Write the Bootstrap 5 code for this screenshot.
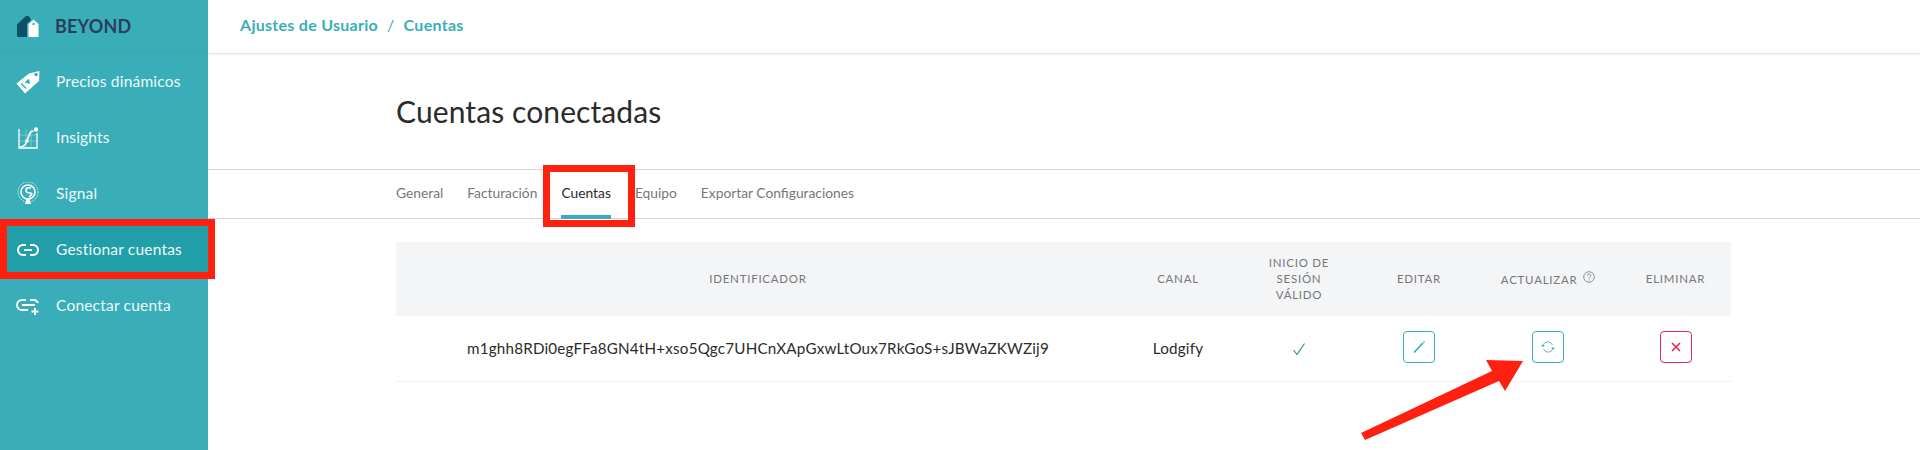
<!DOCTYPE html>
<html lang="es"><head><meta charset="utf-8"><title>Cuentas</title>
<link href="https://cdn.jsdelivr.net/npm/bootstrap@5.3.0/dist/css/bootstrap.min.css" rel="stylesheet">
<style>
html,body{height:450px;overflow:hidden}
body{font-family:Lato,"Open Sans",sans-serif;color:#2b2b2b;background:#fff;position:relative}
.shell{height:450px}
.side{width:208px;background:#39aeb8;flex:none}
.brand{height:53px;padding-left:17px;gap:16px;border-bottom:1px solid #35a6b0;color:#2a3f5d;font-size:18px;font-weight:700;letter-spacing:.2px}
.sitem{height:56px;padding-left:16px;gap:16px;color:#eefafa;font-size:15.5px;letter-spacing:.2px;text-decoration:none}
.sitem.on{background:#229ea8}
.first{height:57px}
.ico{width:24px;height:24px;flex:none}
.main{min-width:0}
.crumb{height:54px;padding-left:32px;padding-bottom:3px;border-bottom:1px solid #e4e4e4;box-shadow:0 1px 2px rgba(0,0,0,.05);color:#39aeb8;font-size:16px;font-weight:700;letter-spacing:.28px;gap:9px}
.crumb i{font-style:normal;font-weight:400}
.head{height:116px;padding-left:188px;border-bottom:1px solid #d4d4d4}
.head h1{font-size:30px;font-weight:400;margin:0;color:#2b2b2b;letter-spacing:.1px;position:relative;top:-1px}
.tabbar{height:49px;padding-left:188px;gap:24px;border-bottom:1px solid #d4d4d4}
.tabbar a{height:49px;display:flex;align-items:center;color:#777;font-size:13.8px;text-decoration:none;border-bottom:4px solid transparent;padding-top:2px;margin-bottom:-1px}
.tabbar a.act{color:#2b2b2b;border-bottom-color:#39aeb8}
.wrap{padding:23px 189px 0 188px}
.wrap table{table-layout:fixed;width:1335px;margin:0}
.wrap th{background:#f4f5f7;height:74px;padding:4px 6px;text-align:center;vertical-align:middle;color:#777;font-size:11.5px;font-weight:400;letter-spacing:.75px;text-transform:uppercase;line-height:16px;border:0}
.wrap th.c3{padding:4px 28px}
.wrap td{height:65px;padding:0;text-align:center;vertical-align:middle;font-size:15.2px;letter-spacing:.2px;border-bottom:1px solid #edf4f4;color:#2b2b2b}
.c1{width:724px}.c2{width:116px}.c3{width:126px}.c4{width:114px}.c5{width:144px}.c6{width:111px}
.sq{width:32px;height:32px;padding:0;border-radius:4px;display:inline-flex;align-items:center;justify-content:center;background:#fff;border:1px solid #39aeb8;position:relative;top:-1px}
.sq.del{border-color:#dc2a55}
.chk{position:relative;top:-1px}
.mark-box{position:absolute;border:7px solid #ff2010;pointer-events:none}
.mk1{left:0;top:219px;width:215px;height:60px}
.mk2{left:543px;top:165px;width:92px;height:62px}
.arrow{position:absolute;left:1360px;top:355px;pointer-events:none}
</style></head><body>
<div class="shell d-flex">
<aside class="side d-flex flex-column">
  <div class="brand d-flex align-items-center">
    <svg width="22" height="23" viewBox="0 0 22 23"><path d="M0 9.500 9 1q2-1 3.500 1L14 5 10 9V22H1.500Q0 22 0 20.500Z" fill="#0d5068"/><path d="M11.500 9 16.500 4.500 21.500 9V22H11.500Z" fill="#fff"/><circle cx="16.500" cy="9" r="1.200" fill="#39aeb8"/></svg>
    <span>BEYOND</span>
  </div>
  <a class="sitem first d-flex align-items-center" href="#"><svg class="ico" viewBox="0 0 24 24"><path d="M0.500 13.500 13 3.500 23.500 1 23 11 9 23.500Z" fill="#fff"/><circle cx="20" cy="4.500" r="1.700" fill="#39aeb8"/><path d="M8.500 12.500 13 8.500 14 14Z" fill="#39aeb8"/><path d="M5 13.500 10 18.500" stroke="#39aeb8" stroke-width="1.500"/></svg><span>Precios dinámicos</span></a>
  <a class="sitem d-flex align-items-center" href="#"><svg class="ico" viewBox="0 0 24 24" fill="none" stroke="#fff"><path d="M3 3v19h18V7" stroke-width="1.300"/><path d="M3 9h18M3 15h18M10 3v19M15 3v19" stroke-width=".5" opacity=".6"/><path d="M3.500 21q5 0 7-5t3-8 4-3" stroke-width="1.600"/><circle cx="11" cy="15" r="1.800" fill="#fff" stroke="none"/><circle cx="20" cy="3.500" r="2.200" fill="#fff" stroke="none"/></svg><span>Insights</span></a>
  <a class="sitem d-flex align-items-center" href="#"><svg class="ico" viewBox="0 0 24 24" fill="none" stroke="#fff"><circle cx="12" cy="10" r="10" stroke-width="1" stroke-dasharray="1 1.200"/><circle cx="12" cy="10" r="7" stroke-width="1.600"/><path d="M15 6q-5-1-5 2t4 3-1 4" stroke-width="1.600"/><path d="M9 22l2-6h2l2 6Z" fill="#fff" stroke="none"/></svg><span>Signal</span></a>
  <a class="sitem on d-flex align-items-center" href="#"><svg class="ico" viewBox="0 0 24 24" fill="none" stroke="#fff" stroke-width="2"><path d="M10 7H7a5 5 0 0 0 0 10h3M14 7h3a5 5 0 0 1 0 10h-3M8 12h8"/></svg><span>Gestionar cuentas</span></a>
  <a class="sitem d-flex align-items-center" href="#"><svg class="ico" viewBox="0 0 24 24" fill="none" stroke="#fff" stroke-width="2"><path d="M10 6H6a4.500 4.500 0 0 0 0 10h6M14 6h4a4.500 4.500 0 0 1 4 3M6 11h13M19 14v7M15.500 17.500h7"/></svg><span>Conectar cuenta</span></a>
</aside>
<div class="main flex-grow-1">
  <div class="crumb d-flex align-items-center"><span>Ajustes de Usuario</span><i>/</i><span>Cuentas</span></div>
  <div class="head d-flex align-items-center"><h1>Cuentas conectadas</h1></div>
  <nav class="tabbar d-flex">
    <a href="#">General</a><a href="#">Facturación</a><a class="act" href="#">Cuentas</a><a href="#">Equipo</a><a href="#">Exportar Configuraciones</a>
  </nav>
  <div class="wrap">
    <table class="table">
      <thead><tr>
        <th class="c1">Identificador</th><th class="c2">Canal</th><th class="c3">Inicio de sesión válido</th><th class="c4">Editar</th>
        <th class="c5">Actualizar <svg width="12" height="12" viewBox="0 0 12 12" fill="none" stroke="#777" style="vertical-align:1px;margin-left:2px"><circle cx="6" cy="6" r="5.300" stroke-width=".8"/><path d="M4.300 4.700a1.700 1.700 0 1 1 2.500 1.500Q6 6.700 6 7.500M6 8.600v.9" stroke-width=".8"/></svg></th>
        <th class="c6">Eliminar</th>
      </tr></thead>
      <tbody><tr>
        <td>m1ghh8RDi0egFFa8GN4tH+xso5Qgc7UHCnXApGxwLtOux7RkGoS+sJBWaZKWZij9</td>
        <td>Lodgify</td>
        <td><svg class="chk" width="14" height="14" viewBox="0 0 14 14" fill="none" stroke="#2e9e6b" stroke-width="1.200"><path d="M1.500 8 5 12.500 12.500 1.500"/></svg></td>
        <td><button class="sq" type="button" aria-label="Editar"><svg width="14" height="14" viewBox="0 0 14 14" fill="none" stroke="#39aeb8"><path d="M2 12.500 11 3" stroke-width="1.800"/><path d="M11.500 2.500 12.500 1.500" stroke-width="1.200"/></svg></button></td>
        <td><button class="sq" type="button" aria-label="Actualizar"><svg width="14" height="14" viewBox="0 0 14 14" fill="none" stroke="#5dbcc5" stroke-width="1"><path d="M2 5.500A5 5 0 0 1 11.500 5M12 8.500A5 5 0 0 1 2.500 9"/><path d="M0 5h3.800L2 7ZM14 9h-3.800L12 7Z" fill="#39aeb8" stroke="none"/></svg></button></td>
        <td><button class="sq del" type="button" aria-label="Eliminar"><svg width="10" height="10" viewBox="0 0 10 10" stroke="#dc2a55" stroke-width="1.600"><path d="M1 1l8 8M9 1l-8 8"/></svg></button></td>
      </tr></tbody>
    </table>
  </div>
</div>
</div>
<div class="mark-box mk1"></div>
<div class="mark-box mk2"></div>
<svg class="arrow" width="170" height="90" viewBox="0 0 170 90"><path d="M1 78 132 16 126 5 163 6 145 36 139 26 5 85Z" fill="#ff2010"/></svg>
</body></html>
